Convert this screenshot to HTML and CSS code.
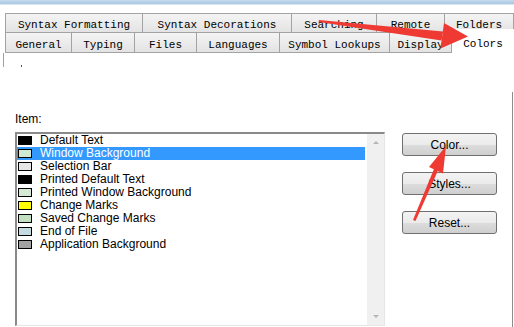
FILE: index.html
```html
<!DOCTYPE html>
<html lang="en">
<head>
    <meta charset="UTF-8">
    <title>Colors</title>
    <link rel="stylesheet" href="styles.css">
</head>
<body>

    <!-- Window frame -->
    <div class="titlebar"></div>

    <!-- Tabs -->
    <div class="tabs">
        <div class="tab-row">
            <div class="tab w-syntax-fmt">Syntax Formatting</div>
            <div class="tab w-syntax-dec">Syntax Decorations</div>
            <div class="tab w-searching">Searching</div>
            <div class="tab w-remote">Remote</div>
            <div class="tab w-folders">Folders</div>
        </div>
        <div class="tab-row front">
            <div class="tab w-general">General</div>
            <div class="tab w-typing">Typing</div>
            <div class="tab w-files">Files</div>
            <div class="tab w-languages">Languages</div>
            <div class="tab w-symbols">Symbol Lookups</div>
            <div class="tab w-display">Display</div>
            <div class="tab active w-colors">Colors</div>
        </div>
    </div>

    <div class="pane"><span class="dot"></span></div>

    <!-- Content -->
    <div class="main">
        <div class="list-col">
            <div class="label">Item:</div>
            <div class="listbox">
                <ul class="items">
                    <li><span class="swatch" style="background:#000000"></span>Default Text</li>
                    <li class="selected"><span class="swatch" style="background:#cfe9d3"></span>Window Background</li>
                    <li><span class="swatch" style="background:#e6e6e6"></span>Selection Bar</li>
                    <li><span class="swatch" style="background:#000000"></span>Printed Default Text</li>
                    <li><span class="swatch" style="background:#d6e9d6"></span>Printed Window Background</li>
                    <li><span class="swatch" style="background:#ffff00"></span>Change Marks</li>
                    <li><span class="swatch" style="background:#c2dfc2"></span>Saved Change Marks</li>
                    <li><span class="swatch" style="background:#c4dbe0"></span>End of File</li>
                    <li><span class="swatch" style="background:#a3a3a3"></span>Application Background</li>
                </ul>
                <div class="scrollbar">
                    <span class="arrow up"></span>
                    <span class="arrow down"></span>
                </div>
            </div>
        </div>
        <div class="btn-col">
            <button>Color...</button>
            <button>Styles...</button>
            <button>Reset...</button>
        </div>
    </div>

    <!-- Annotation arrows drawn over the screenshot -->
    <svg class="marks" width="514" height="327" viewBox="0 0 514 327">
        <polygon points="319,20 443,31.5 441.5,40.5 318.5,22" fill="#ee3a32"/>
        <polygon points="444,23 468,36.5 440.5,48.5" fill="#ee3a32"/>
        <polygon points="413,220 434.2,168.5 438,170.5 415.5,221" fill="#ee3a32"/>
        <polygon points="446,146 443,173.5 429,167" fill="#ee3a32"/>
    </svg>

</body>
</html>
```

FILE: styles.css
```css
body {
    margin: 0;
    width: 514px;
    height: 327px;
    overflow: hidden;
    position: relative;
    background: #ffffff;
    font-family: "Liberation Sans", Arial, sans-serif;
    font-size: 12px;
    color: #000;
}

/* Window frame */
.titlebar {
    height: 4px;
    background: linear-gradient(#c6dbef, #a8c5e2);
    border-bottom: 1px solid #dbe6f2;
}

/* Tabs */
.tabs {
    margin-top: 8px;
    padding-left: 5px;
    font-family: "Liberation Mono", "DejaVu Sans Mono", monospace;
    font-size: 11px;
}
.tab-row {
    display: flex;
    height: 20px;
}
.tab {
    box-sizing: border-box;
    height: 20px;
    line-height: 22px;
    text-align: center;
    background: linear-gradient(#f4f4f4, #e3e3e3);
    border: 1px solid #a3a3a3;
    border-left: none;
    white-space: nowrap;
    overflow: hidden;
}
.tab-row .tab:first-child {
    border-left: 1px solid #a3a3a3;
}
.tab-row.front .tab {
    border-top: none;
    padding-top: 1px;
}
.tab.active {
    background: #ffffff;
    height: 24px;
    margin-top: -4px;
    border: none;
    padding-top: 0;
    line-height: 29px;
}
.w-syntax-fmt { width: 138px; }
.w-syntax-dec { width: 149px; }
.w-searching { width: 85px; }
.w-remote { width: 68px; }
.w-folders { width: 69px; }
.w-general { width: 67px; }
.w-typing { width: 63px; }
.w-files { width: 62px; }
.w-languages { width: 83px; }
.w-symbols { width: 110px; }
.w-display { width: 62px; }
.w-colors { width: 62px; }

.pane {
    height: 14px;
    margin-left: 3px;
    border-left: 1px solid #a0a0a0;
    position: relative;
}
.dot {
    position: absolute;
    left: 17px;
    top: 12px;
    width: 1px;
    height: 2px;
    background: #555;
}

/* Content */
.main {
    display: flex;
    box-sizing: border-box;
    width: 513px;
    height: 235px;
    margin-top: 25px;
    padding: 21px 0 0 15px;
    border-right: 1px solid #8c8c8c;
}
.label {
    height: 13px;
    line-height: 13px;
    margin-bottom: 6px;
}
.listbox {
    display: flex;
    box-sizing: border-box;
    width: 370px;
    height: 194px;
    border-top: 2px solid #8a8a8a;
    border-left: 2px solid #8a8a8a;
    border-right: 1px solid #e6e6e6;
    border-bottom: 1px solid #e6e6e6;
}
.items {
    list-style: none;
    margin: 0;
    padding: 0 2px 0 0;
    flex: 1;
}
.items li {
    display: flex;
    align-items: center;
    height: 13px;
    line-height: 13px;
    white-space: nowrap;
}
.items li.selected {
    background: #3399ff;
    color: #ffffff;
}
.swatch {
    box-sizing: border-box;
    width: 14px;
    height: 9px;
    margin: 0 8px 0 1px;
    border: 1px solid #000;
}
.scrollbar {
    width: 17px;
    background: #f0f0f0;
    position: relative;
}
.arrow {
    position: absolute;
    left: 6px;
    width: 0;
    height: 0;
    border-left: 3px solid transparent;
    border-right: 3px solid transparent;
}
.arrow.up {
    top: 7px;
    border-bottom: 3px solid #b5b5b5;
}
.arrow.down {
    bottom: 7px;
    border-top: 3px solid #b5b5b5;
}

.btn-col {
    display: flex;
    flex-direction: column;
    gap: 16px;
    margin: 20px 0 0 17px;
}
button {
    box-sizing: border-box;
    width: 95px;
    height: 23px;
    font-family: "Liberation Sans", Arial, sans-serif;
    font-size: 12px;
    color: #000;
    background: linear-gradient(#f3f3f3 0%, #ebebeb 50%, #dddddd 51%, #cfcfcf 100%);
    border: 1px solid #707070;
    border-radius: 3px;
    padding: 0;
}

/* Annotation overlay */
.marks {
    position: absolute;
    left: 0;
    top: 0;
    pointer-events: none;
}
```
